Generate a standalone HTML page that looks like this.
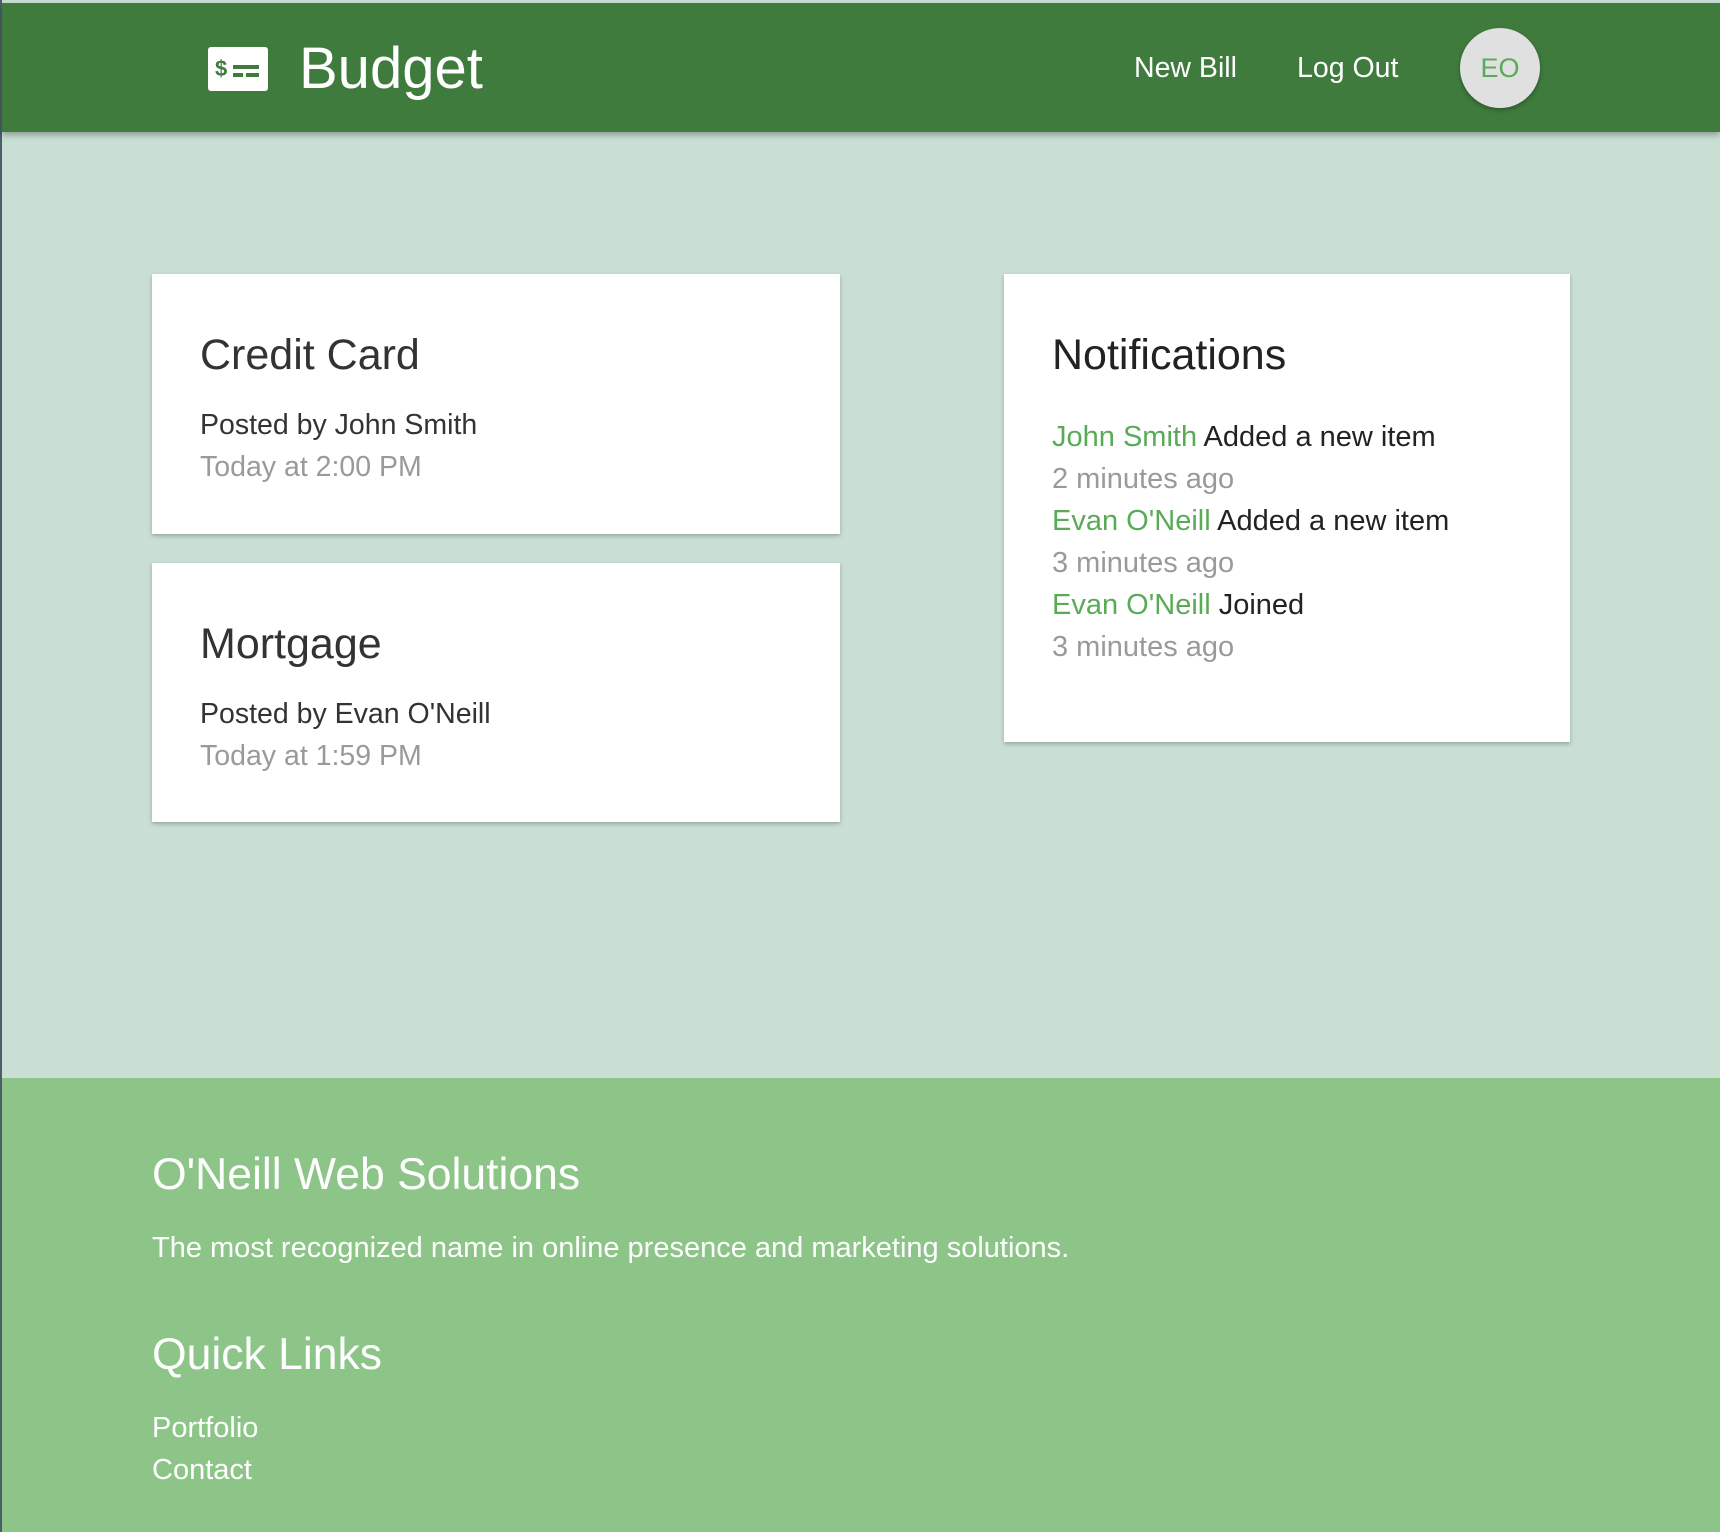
<!DOCTYPE html>
<html><head><style>
*{margin:0;padding:0;box-sizing:border-box}
body{width:1720px;height:1532px;background:#c9dfd4;font-family:"Liberation Sans",sans-serif;position:relative;overflow:hidden}
.abs{position:absolute;white-space:nowrap}
header{position:absolute;left:2px;top:3px;width:1718px;height:129px;background:#3f7b3d;box-shadow:0 3px 6px rgba(0,0,0,.3)}
.card{position:absolute;background:#fff;box-shadow:0 2px 4px rgba(0,0,0,.25)}
.t{font-size:43px;color:#333}
.p{font-size:28.5px;color:#333}
.g{font-size:28.5px;color:#9a9a9a}
.n{font-size:29px;color:#222;line-height:42px}
.n span{color:#5aab57}
footer{position:absolute;left:2px;top:1078px;width:1718px;height:454px;background:#8dc589;color:#fff}
</style></head><body>
<div class="abs" style="left:0;top:0;width:2px;height:1532px;background:#4a5f6a"></div>
<header>
<svg class="abs" style="left:206px;top:44px" width="60" height="44" viewBox="0 0 60 44"><rect x="0" y="0" width="60" height="44" rx="3" fill="#fff"/><text x="7" y="29" font-family="Liberation Sans" font-weight="bold" font-size="22" fill="#3f7b3d">$</text><rect x="25" y="18" width="26" height="4" fill="#3f7b3d"/><rect x="25" y="26" width="10" height="4" fill="#3f7b3d"/><rect x="38" y="26" width="13" height="4" fill="#3f7b3d"/></svg>
<div class="abs" style="left:297px;top:32px;font-size:58px;color:#fff">Budget</div>
<div class="abs" style="left:1132px;top:49px;font-size:28.5px;color:#fff">New Bill</div>
<div class="abs" style="left:1295px;top:49px;font-size:28.5px;color:#fff">Log Out</div>
<div class="abs" style="left:1458px;top:25px;width:80px;height:80px;border-radius:50%;background:#e0e0e0;box-shadow:0 2px 5px rgba(0,0,0,.3);color:#5aab57;font-size:27px;text-align:center;line-height:80px">EO</div>
</header>
<div class="card" style="left:152px;top:274px;width:688px;height:260px">
<div class="abs t" style="left:48px;top:57px">Credit Card</div>
<div class="abs p" style="left:48px;top:135px">Posted by John Smith</div>
<div class="abs g" style="left:48px;top:177px">Today at 2:00 PM</div>
</div>
<div class="card" style="left:152px;top:563px;width:688px;height:259px">
<div class="abs t" style="left:48px;top:57px">Mortgage</div>
<div class="abs p" style="left:48px;top:135px">Posted by Evan O'Neill</div>
<div class="abs g" style="left:48px;top:177px">Today at 1:59 PM</div>
</div>
<div class="card" style="left:1004px;top:274px;width:566px;height:468px">
<div class="abs t" style="left:48px;top:57px;color:#222">Notifications</div>
<div class="abs n" style="left:48px;top:142px">
<div><span>John Smith</span> Added a new item</div>
<div style="color:#9a9a9a">2 minutes ago</div>
<div><span>Evan O'Neill</span> Added a new item</div>
<div style="color:#9a9a9a">3 minutes ago</div>
<div><span>Evan O'Neill</span> Joined</div>
<div style="color:#9a9a9a">3 minutes ago</div>
</div>
</div>
<footer>
<div class="abs" style="left:150px;top:72px;font-size:44.5px">O'Neill Web Solutions</div>
<div class="abs" style="left:150px;top:154px;font-size:29px">The most recognized name in online presence and marketing solutions.</div>
<div class="abs" style="left:150px;top:252px;font-size:44.5px">Quick Links</div>
<div class="abs" style="left:150px;top:334px;font-size:29px">Portfolio</div>
<div class="abs" style="left:150px;top:376px;font-size:29px">Contact</div>
</footer>
</body></html>
